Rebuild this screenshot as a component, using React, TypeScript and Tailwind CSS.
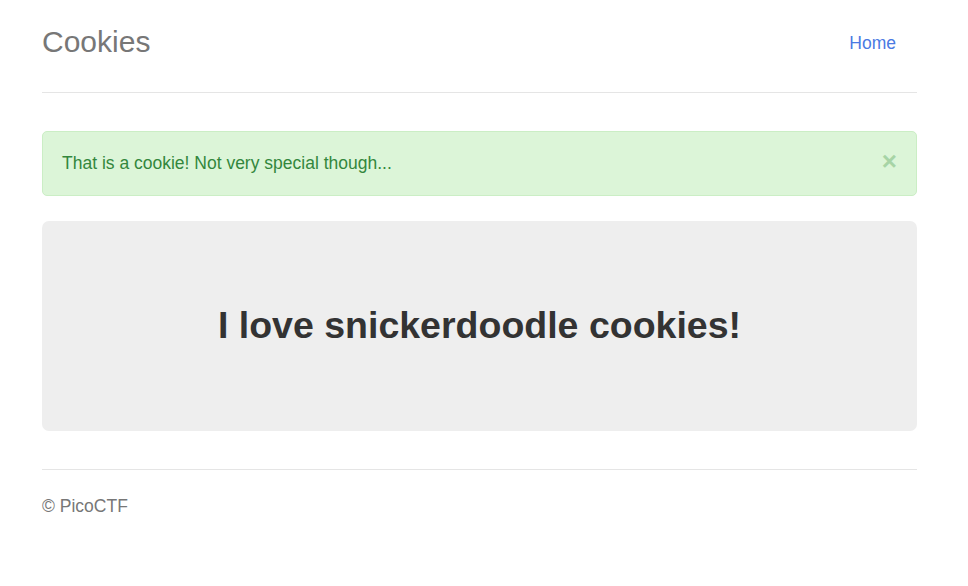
import React from 'react';

const App: React.FC = () => {
  return (
    <div className="min-h-screen bg-white font-['Liberation_Sans',Arial,sans-serif] text-[17.5px] text-[#333]">
      <div className="w-[875px] ml-[42px]">
        <header className="flex items-start justify-between pt-[17px] pb-[25px] border-b border-[#e5e5e5]">
          <h3 className="text-[30px] leading-[50px] text-[#777]">Cookies</h3>
          <a href="#" className="px-[21px] mt-[2px] leading-[48px] text-[17.5px] text-[#4a7ae3]">
            Home
          </a>
        </header>

        <div className="mt-[38px] flex items-center justify-between h-[65px] pl-[19px] pr-[19px] bg-[#dcf5d8] border border-[#cbeec5] rounded-[5px]">
          <span className="text-[#33873d] leading-[25px]">That is a cookie! Not very special though...</span>
          <button className="text-[26px] font-bold leading-none text-[#a7d4a6] -mt-[5px]">×</button>
        </div>

        <div className="mt-[25px] h-[210px] flex items-center justify-center bg-[#eee] rounded-[7px]">
          <h1 className="text-[37.5px] font-bold leading-[1.1] text-[#333]">I love snickerdoodle cookies!</h1>
        </div>

        <footer className="mt-[38px] pt-[24px] border-t border-[#e5e5e5]">
          <p className="text-[#777] leading-[25px]">© PicoCTF</p>
        </footer>
      </div>
    </div>
  );
};

export default App;
